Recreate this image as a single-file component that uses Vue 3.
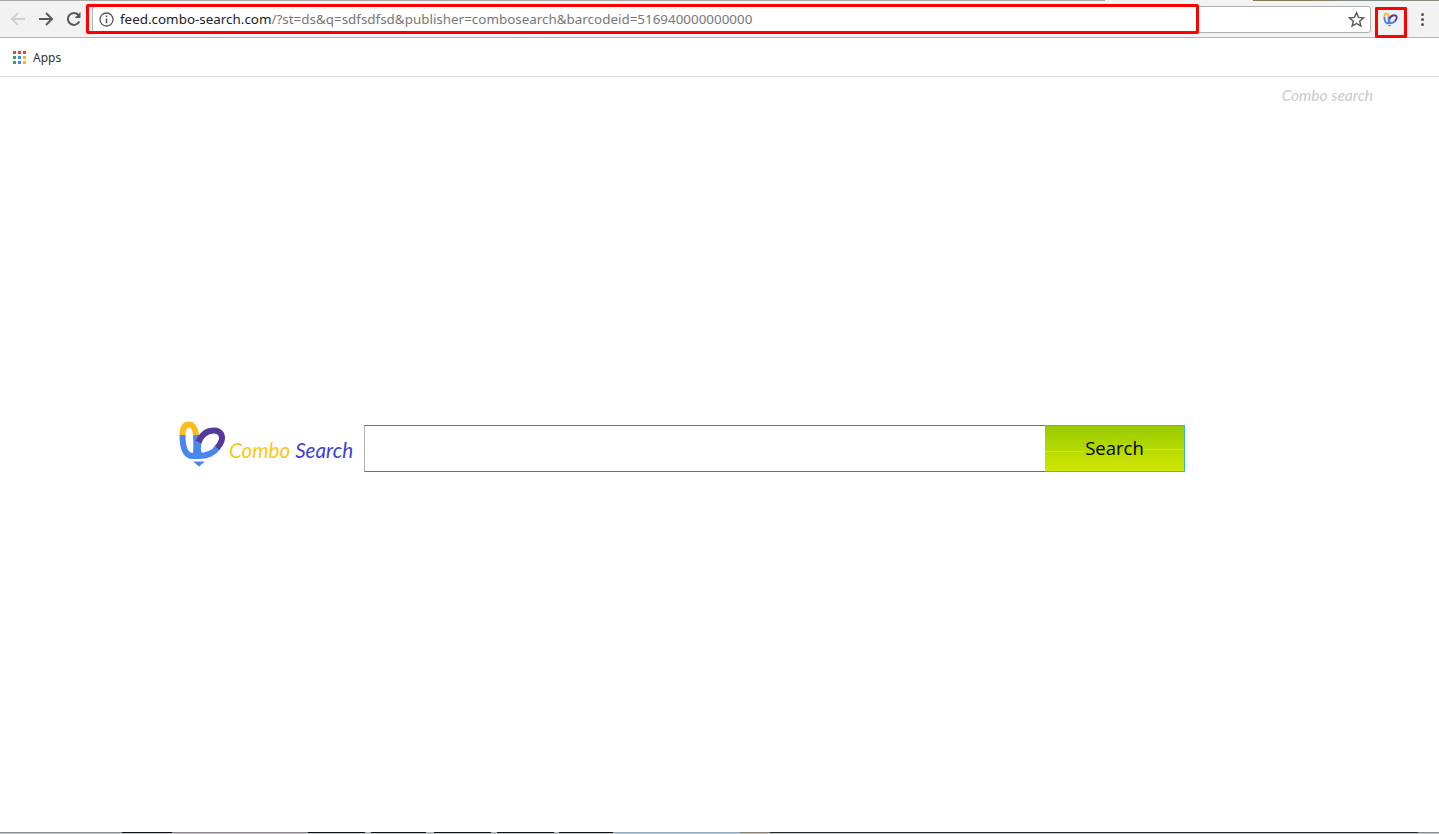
<script setup>
const bottomSegments = [
  { w: 122, c: '#8a8d8a' }, { w: 50, c: '#111' }, { w: 136, c: '#8d8589' }, { w: 57, c: '#111' },
  { w: 6, c: '#a9b4c4' }, { w: 55, c: '#111' }, { w: 8, c: '#a9b4c4' }, { w: 57, c: '#111' },
  { w: 6, c: '#a9b4c4' }, { w: 57, c: '#111' }, { w: 5, c: '#a9b4c4' }, { w: 54, c: '#111' },
  { w: 127, c: '#93a9c4' }, { w: 30, c: '#8a8272' }, { w: 648, c: '#2a2a2a' }, { w: 21, c: '#8c8c8c' }
]
</script>

<template>
  <div class="screen">
    <div class="top-strip">
      <span class="strip-grey"></span>
      <span class="strip-photo"></span>
    </div>
    <header class="toolbar">
      <button class="nav-btn" aria-label="Back">
        <svg width="18" height="18" viewBox="0 0 18 18"><path d="M16 9H3.500M9 3 3 9l6 6" fill="none" stroke="#d0d0d0" stroke-width="2"/></svg>
      </button>
      <button class="nav-btn" aria-label="Forward">
        <svg width="18" height="18" viewBox="0 0 18 18"><path d="M2 9h12.500M9 3l6 6-6 6" fill="none" stroke="#5a5a5a" stroke-width="2"/></svg>
      </button>
      <button class="nav-btn" aria-label="Reload">
        <svg width="18" height="18" viewBox="0 0 18 18"><path d="M14.300 11.500A6 6 0 1 1 13.300 4.800" fill="none" stroke="#5a5a5a" stroke-width="2"/><path d="M15.500 2v6h-6z" fill="#5a5a5a"/></svg>
      </button>
      <div class="omnibox">
        <svg class="info" width="15" height="15" viewBox="0 0 15 15"><circle cx="7.500" cy="7.500" r="6.500" fill="none" stroke="#555" stroke-width="1.300"/><path d="M7.500 6.500v4.800M7.500 3.500v1.600" stroke="#555" stroke-width="1.500"/></svg>
        <span class="url"><span class="host">feed.combo-search.com</span>/?st=ds&amp;q=sdfsdfsd&amp;publisher=combosearch&amp;barcodeid=516940000000000</span>
        <svg class="star" width="17" height="17" viewBox="0 0 17 17"><path d="m8.500 1.800 2 4.600 5 .5-3.800 3.300 1.200 4.900-4.400-2.600-4.400 2.600 1.200-4.900L1.500 6.900l5-.5z" fill="none" stroke="#555" stroke-width="1.400"/></svg>
      </div>
      <div class="ext">
        <svg width="15" height="15" viewBox="0 0 48 46"><use href="#combo-logo"/></svg>
      </div>
      <div class="menu"><i></i><i></i><i></i></div>
    </header>
    <nav class="bookmarks">
      <div class="apps-grid">
        <i style="background:#ea4335"></i><i style="background:#ea4335"></i><i style="background:#ea4335"></i>
        <i style="background:#34a853"></i><i style="background:#4285f4"></i><i style="background:#fbbc05"></i>
        <i style="background:#34a853"></i><i style="background:#4285f4"></i><i style="background:#fbbc05"></i>
      </div>
      <span class="apps-label">Apps</span>
    </nav>
    <main class="page">
      <div class="page-link">Combo search</div>
      <div class="search-row">
        <svg class="logo" width="48" height="46" viewBox="0 0 48 46">
          <defs>
            <g id="combo-logo" fill="none" stroke-width="6">
              <path d="M4.500 14C4.500 24 6 35 15 35H20C28 35 36 32 40 26" stroke="#4a86ee"/>
              <path d="M18 13C18.500 20 18.500 28 18 35" stroke="#4a86ee"/>
              <path d="M21 20C19.500 25 19.500 31 22 35" stroke="#4a86ee"/>
              <path d="M4.500 14C4.500 6 7.500 3.500 11 3.500C15 3.500 17.500 8 18 14" stroke="#fbbc1e"/>
              <path d="M20.500 21C24 13 30 9.500 36 9.500C43 9.500 45 15 43.500 20C42.500 23 41 25 39 27" stroke="#56399c"/>
              <path d="M15 40.500H27L21 45.500Z" fill="#4a86ee" stroke="none"/>
            </g>
          </defs>
          <use href="#combo-logo"/>
        </svg>
        <div class="brand"><span class="brand-a">Combo</span> <span class="brand-b">Search</span></div>
        <div class="search-box">
          <input class="search-input" type="text" aria-label="Search" />
          <button class="search-btn">
            <span class="btn-line btn-line-l"></span>
            <span class="btn-line btn-line-r"></span>
            <span class="btn-text">Search</span>
          </button>
        </div>
      </div>
    </main>
    <div class="bottom-strip">
      <span v-for="(s, i) in bottomSegments" :key="i" :style="{ width: s.w + 'px', background: s.c }"></span>
    </div>
    <div class="mark mark-url"></div>
    <div class="mark mark-ext"></div>
  </div>
</template>

<style scoped>
.screen {
  position: relative;
  width: 1439px;
  height: 834px;
  overflow: hidden;
  background: #fff;
  display: flex;
  flex-direction: column;
  font-family: "Open Sans", "Noto Sans", sans-serif;
}
.top-strip {
  height: 1px;
  display: flex;
  background: #f2f2f2;
  flex: none;
}
.strip-grey { width: 1105px; background: #a8a8a8; }
.strip-photo {
  width: 334px;
  background: linear-gradient(90deg, #f2f2f2 0 148px, #8a7a55 148px 200px, #7d8f8c 260px, #8a8a70 334px);
}
.toolbar {
  height: 37px;
  flex: none;
  box-sizing: border-box;
  border-bottom: 1px solid #b4b4b4;
  background: #f2f2f2;
  display: flex;
  align-items: center;
  padding: 0 0 0 4px;
}
.nav-btn {
  width: 28px;
  height: 28px;
  padding: 0;
  border: 0;
  background: none;
  display: flex;
  align-items: center;
  justify-content: center;
  flex: none;
}
.omnibox {
  width: 1279px;
  height: 27px;
  margin-left: 4px;
  box-sizing: border-box;
  border: 1px solid #b0b0b0;
  border-radius: 3px;
  background: #fff;
  display: flex;
  align-items: center;
  padding: 0 5px 0 6px;
}
.info { flex: none; }
.url {
  margin-left: 6px;
  font-size: 13.420px;
  color: #777;
  white-space: nowrap;
  flex: 1;
  font-family: "Noto Sans", "Open Sans", sans-serif;
}
.host { color: #222; }
.star { flex: none; }
.ext {
  width: 30px;
  height: 28px;
  margin-left: 4px;
  display: flex;
  align-items: center;
  justify-content: center;
  flex: none;
}
.menu {
  margin-left: 16px;
  display: flex;
  flex-direction: column;
  gap: 2px;
}
.menu i {
  width: 3px;
  height: 3px;
  border-radius: 50%;
  background: #555;
  display: block;
}
.bookmarks {
  height: 39px;
  flex: none;
  box-sizing: border-box;
  border-bottom: 1px solid #dadada;
  display: flex;
  align-items: center;
  padding-left: 13px;
  background: #fff;
}
.apps-grid {
  display: grid;
  grid-template-columns: repeat(3, 3px);
  grid-auto-rows: 3px;
  gap: 2px;
}
.apps-grid i { display: block; }
.apps-label {
  margin-left: 7px;
  font-size: 12px;
  color: #333;
  font-family: "Noto Sans", sans-serif;
}
.page {
  flex: 1;
  display: flex;
  flex-direction: column;
}
.page-link {
  margin: 9px 66px 0 0;
  text-align: right;
  font: italic 15.500px/18px Lato, sans-serif;
  color: #cacaca;
}
.search-row {
  margin-top: 317px;
  padding-left: 178px;
  display: flex;
  align-items: flex-start;
}
.logo { flex: none; }
.brand {
  width: 135px;
  margin: 16px 0 0 3px;
  font: italic 20.700px/26px Lato, sans-serif;
  white-space: nowrap;
  flex: none;
}
.brand-a { color: #fdc51a; }
.brand-b { color: #3d3fcf; }
.search-box {
  display: flex;
  height: 47px;
  margin-top: 4px;
}
.search-input {
  width: 681px;
  box-sizing: border-box;
  border: 1px solid #6f6f6f;
  border-left: 1px solid #b0b0b0;
  border-right: 0;
  background: #fff;
  outline: none;
  padding: 0;
}
.search-btn {
  position: relative;
  width: 140px;
  box-sizing: border-box;
  border: 1px solid #2cc4b0;
  border-left: 0;
  background: linear-gradient(180deg, #97cb00, #d3e600);
  padding: 0;
  font: 18.500px/1 "Open Sans", sans-serif;
  color: #000;
}
.btn-text { position: relative; }
.btn-line {
  position: absolute;
  height: 1px;
  background: #c8d48a;
}
.btn-line-l { left: 0; width: 40px; top: 25px; }
.btn-line-r { right: 0; width: 41px; top: 23px; }
.bottom-strip {
  position: absolute;
  left: 0;
  bottom: 1px;
  display: flex;
  height: 1px;
}
.bottom-strip span { display: block; height: 1px; flex: none; }
.screen::after {
  content: "";
  position: absolute;
  left: 0;
  right: 0;
  bottom: 0;
  height: 1px;
  background: #c2c4c6;
}
.mark {
  position: absolute;
  box-sizing: border-box;
  border: 3px solid #f00;
  pointer-events: none;
}
.mark-url { left: 86px; top: 4px; width: 1113px; height: 30px; border-radius: 2px; }
.mark-ext { left: 1375px; top: 7px; width: 32px; height: 31px; border-radius: 1px; }
</style>
